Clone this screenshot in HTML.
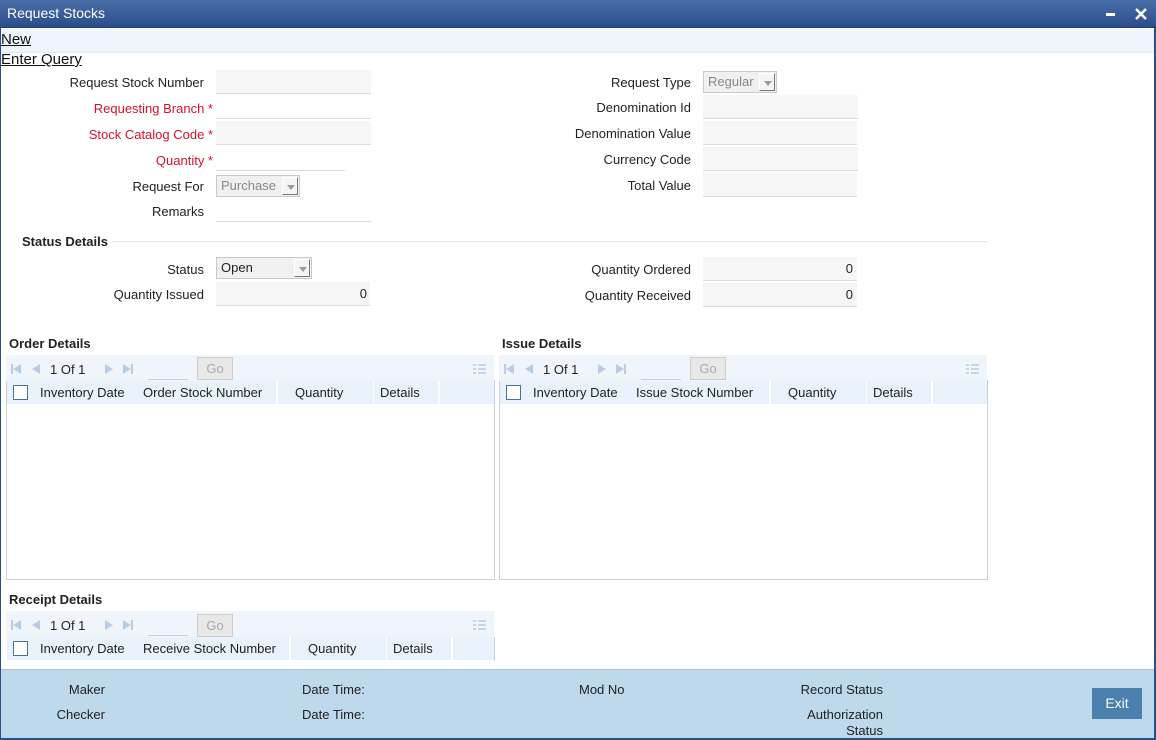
<!DOCTYPE html>
<html><head><meta charset="utf-8"><style>
*{box-sizing:border-box;margin:0;padding:0}
body{width:1156px;height:740px;overflow:hidden;background:#fff;font-family:"Liberation Sans",Arial,sans-serif;font-size:13px;color:#222;position:relative}
.a{position:absolute;white-space:nowrap}
.lbl{position:absolute;text-align:right;white-space:nowrap}
.red{color:#d0132b}
.fld{position:absolute;height:24px;background:#f6f6f6;border-bottom:1px solid #dcdcdc;text-align:right;padding-right:4px;line-height:24px}
.fw{background:#fff}
.sel{position:absolute;height:22px;background:#f0f0f0;border:1px solid #c9c9c9;color:#888;line-height:20px;padding-left:4px}
.sel i{position:absolute;right:1px;top:1px;width:16px;height:18px;background:#f4f4f4;border-right:1px solid #777;border-bottom:1px solid #777;border-left:1px solid #fff;border-top:1px solid #fff}
.sel i:after{content:"";position:absolute;left:4px;top:7px;border:4px solid transparent;border-top:5px solid #999;border-bottom:0}
.hd{position:absolute;font-weight:bold}
.grid{position:absolute;border:1px solid #c7d2dc;background:#fff}
.tb{position:absolute;height:26px;background:#f0f5fb}
.hr{position:absolute;height:23px;background:#e9f1fa}
.hc{position:absolute;top:0;height:23px;line-height:23px;background:#e9f1fa;border-right:2px solid #fff;padding-left:6px}
.cb{position:absolute;left:6px;top:4px;width:15px;height:15px;border:1px solid #4a6f95;background:#fff}
.go{position:absolute;width:36px;height:23px;background:#e8e8e8;border:1px solid #ccc;color:#aaa;text-align:center;line-height:21px}
.pg{position:absolute;color:#222}
svg.p{position:absolute}
</style></head><body>
<div class="a" style="left:0;top:0;width:1156px;height:28px;background:linear-gradient(#4a6fa8,#2c4d8c);border-bottom:1px solid #1f3c70"></div>
<div class="a" style="left:7px;top:5px;color:#fff;font-size:14px">Request Stocks</div>
<div class="a" style="left:1106px;top:13px;width:9px;height:3px;background:#fff"></div>
<svg class="a" style="left:1135px;top:8px" width="12" height="12"><path d="M1 1L11 11M11 1L1 11" stroke="#fff" stroke-width="2.4"/></svg>
<div class="a" style="left:0;top:28px;width:1156px;height:712px;border-left:1px solid #2c4d8c;border-right:2px solid #2c4d8c"></div>
<div class="a" style="left:1px;top:29px;width:1153px;height:24px;background:#eef5fd;border-bottom:1px solid #e4e8ec"></div>
<div class="a" style="left:1px;top:31px;font-size:15px;text-decoration:underline;color:#111">New</div>
<div class="a" style="left:1px;top:51px;font-size:15px;text-decoration:underline;color:#111">Enter Query</div>

<div class="lbl" style="right:952px;top:75px">Request Stock Number</div>
<div class="fld" style="left:216px;top:70px;width:155px"></div>
<div class="lbl red" style="right:943px;top:101px">Requesting Branch *</div>
<div class="fld fw" style="left:216px;top:95px;width:155px"></div>
<div class="lbl red" style="right:943px;top:127px">Stock Catalog Code *</div>
<div class="fld" style="left:216px;top:121px;width:155px"></div>
<div class="lbl red" style="right:943px;top:153px">Quantity *</div>
<div class="fld fw" style="left:216px;top:147px;width:129px"></div>
<div class="lbl" style="right:952px;top:179px">Request For</div>
<div class="sel" style="left:216px;top:175px;width:84px">Purchase<i></i></div>
<div class="lbl" style="right:952px;top:204px">Remarks</div>
<div class="fld fw" style="left:216px;top:198px;width:155px"></div>

<div class="lbl" style="right:465px;top:75px">Request Type</div>
<div class="sel" style="left:703px;top:71px;width:74px">Regular<i></i></div>
<div class="lbl" style="right:465px;top:100px">Denomination Id</div>
<div class="fld" style="left:703px;top:95px;width:155px"></div>
<div class="lbl" style="right:465px;top:126px">Denomination Value</div>
<div class="fld" style="left:703px;top:121px;width:154px"></div>
<div class="lbl" style="right:465px;top:152px">Currency Code</div>
<div class="fld" style="left:703px;top:147px;width:155px"></div>
<div class="lbl" style="right:465px;top:178px">Total Value</div>
<div class="fld" style="left:703px;top:173px;width:154px"></div>

<div class="hd" style="left:22px;top:234px">Status Details</div>
<div class="a" style="left:112px;top:241px;width:876px;height:1px;background:#e6e6e6"></div>
<div class="lbl" style="right:952px;top:262px">Status</div>
<div class="sel" style="left:216px;top:257px;width:96px;color:#222">Open<i></i></div>
<div class="lbl" style="right:952px;top:287px">Quantity Issued</div>
<div class="fld" style="left:216px;top:282px;width:154px;padding-right:3px">0</div>
<div class="lbl" style="right:465px;top:262px">Quantity Ordered</div>
<div class="fld" style="left:703px;top:257px;width:154px">0</div>
<div class="lbl" style="right:465px;top:288px">Quantity Received</div>
<div class="fld" style="left:703px;top:283px;width:154px">0</div>

<!-- order grid -->
<div class="hd" style="left:9px;top:336px">Order Details</div>
<div class="grid" style="left:6px;top:380px;width:489px;height:200px"></div>
<div class="tb" style="left:6px;top:355px;width:488px"></div>
<svg class="p" style="left:10px;top:362px" width="125" height="14"><g fill="#b8cde3"><rect x="1" y="2" width="2" height="10"/><path d="M3 7L11 2V12Z"/><path d="M22 7L30 2V12Z"/><path d="M95 2L103 7L95 12Z"/><path d="M113 2L121 7L113 12Z"/><rect x="121" y="2" width="2" height="10"/></g></svg>
<div class="pg" style="left:50px;top:362px">1&nbsp;Of&nbsp;1</div>
<div class="a" style="left:148px;top:379px;width:40px;height:1px;background:#ccc"></div>
<div class="go" style="left:197px;top:357px">Go</div>
<svg class="p" style="left:473px;top:363px" width="13" height="12"><g fill="#c5d6e8"><rect x="0" y="1" width="3" height="2"/><rect x="5" y="1" width="8" height="2"/><rect x="0" y="5" width="3" height="2"/><rect x="5" y="5" width="8" height="2"/><rect x="0" y="9" width="3" height="2"/><rect x="5" y="9" width="8" height="2"/></g></svg>
<div class="hr" style="left:7px;top:381px;width:487px">
<div class="cb"></div>
<div class="hc" style="left:27px;width:109px">Inventory Date</div>
<div class="hc" style="left:130px;width:141px">Order Stock Number</div>
<div class="hc" style="left:271px;width:97px;padding-left:17px">Quantity</div>
<div class="hc" style="left:367px;width:66px">Details</div>
</div>

<!-- issue grid -->
<div class="hd" style="left:502px;top:336px">Issue Details</div>
<div class="grid" style="left:499px;top:380px;width:489px;height:200px"></div>
<div class="tb" style="left:499px;top:355px;width:488px"></div>
<svg class="p" style="left:503px;top:362px" width="125" height="14"><g fill="#b8cde3"><rect x="1" y="2" width="2" height="10"/><path d="M3 7L11 2V12Z"/><path d="M22 7L30 2V12Z"/><path d="M95 2L103 7L95 12Z"/><path d="M113 2L121 7L113 12Z"/><rect x="121" y="2" width="2" height="10"/></g></svg>
<div class="pg" style="left:543px;top:362px">1&nbsp;Of&nbsp;1</div>
<div class="a" style="left:641px;top:379px;width:40px;height:1px;background:#ccc"></div>
<div class="go" style="left:690px;top:357px">Go</div>
<svg class="p" style="left:966px;top:363px" width="13" height="12"><g fill="#c5d6e8"><rect x="0" y="1" width="3" height="2"/><rect x="5" y="1" width="8" height="2"/><rect x="0" y="5" width="3" height="2"/><rect x="5" y="5" width="8" height="2"/><rect x="0" y="9" width="3" height="2"/><rect x="5" y="9" width="8" height="2"/></g></svg>
<div class="hr" style="left:500px;top:381px;width:487px">
<div class="cb"></div>
<div class="hc" style="left:27px;width:109px">Inventory Date</div>
<div class="hc" style="left:130px;width:141px">Issue Stock Number</div>
<div class="hc" style="left:271px;width:97px;padding-left:17px">Quantity</div>
<div class="hc" style="left:367px;width:66px">Details</div>
</div>

<!-- receipt grid -->
<div class="hd" style="left:9px;top:592px">Receipt Details</div>
<div class="tb" style="left:6px;top:611px;width:488px"></div>
<div class="a" style="left:494px;top:637px;width:1px;height:24px;background:#c7d2dc"></div>
<svg class="p" style="left:10px;top:618px" width="125" height="14"><g fill="#b8cde3"><rect x="1" y="2" width="2" height="10"/><path d="M3 7L11 2V12Z"/><path d="M22 7L30 2V12Z"/><path d="M95 2L103 7L95 12Z"/><path d="M113 2L121 7L113 12Z"/><rect x="121" y="2" width="2" height="10"/></g></svg>
<div class="pg" style="left:50px;top:618px">1&nbsp;Of&nbsp;1</div>
<div class="a" style="left:148px;top:635px;width:40px;height:1px;background:#ccc"></div>
<div class="go" style="left:197px;top:614px">Go</div>
<svg class="p" style="left:473px;top:619px" width="13" height="12"><g fill="#c5d6e8"><rect x="0" y="1" width="3" height="2"/><rect x="5" y="1" width="8" height="2"/><rect x="0" y="5" width="3" height="2"/><rect x="5" y="5" width="8" height="2"/><rect x="0" y="9" width="3" height="2"/><rect x="5" y="9" width="8" height="2"/></g></svg>
<div class="hr" style="left:7px;top:637px;width:487px">
<div class="cb"></div>
<div class="hc" style="left:27px;width:109px">Inventory Date</div>
<div class="hc" style="left:130px;width:154px">Receive Stock Number</div>
<div class="hc" style="left:284px;width:97px;padding-left:17px">Quantity</div>
<div class="hc" style="left:380px;width:66px">Details</div>
</div>

<!-- footer -->
<div class="a" style="left:1px;top:669px;width:1153px;height:71px;background:#bed8ec;border-top:1px solid #a9c4dc;border-bottom:2px solid #2c4d8c"></div>
<div class="lbl" style="right:1051px;top:682px">Maker</div>
<div class="lbl" style="right:1051px;top:707px">Checker</div>
<div class="a" style="left:302px;top:682px">Date Time:</div>
<div class="a" style="left:302px;top:707px">Date Time:</div>
<div class="a" style="left:579px;top:682px">Mod No</div>
<div class="lbl" style="right:273px;top:682px">Record Status</div>
<div class="lbl" style="right:273px;top:707px;text-align:right;line-height:16px">Authorization<br>Status</div>
<div class="a" style="left:1092px;top:688px;width:50px;height:31px;background:#4a7fae;color:#fff;text-align:center;line-height:31px;font-size:14px">Exit</div>
</body></html>
